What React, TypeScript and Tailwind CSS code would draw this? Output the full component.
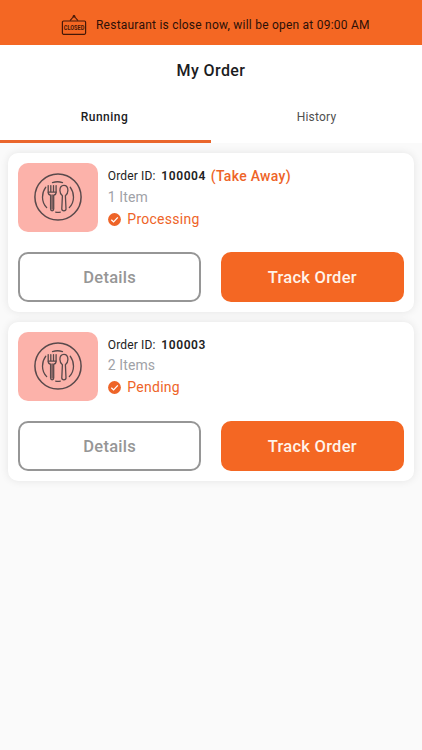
import { useState } from 'react';

interface Order {
  id: number;
  items: number;
  status: string;
  takeAway?: boolean;
}

const orders: Order[] = [
  { id: 100004, items: 1, status: 'Processing', takeAway: true },
  { id: 100003, items: 2, status: 'Pending' },
];

const tabs = ['Running', 'History'];

function ClosedSign() {
  return (
    <svg className="w-[26px] h-[22px] shrink-0 overflow-visible" viewBox="0 0 26 22" fill="none" stroke="#451808">
      <rect x="1.4" y="7" width="23.2" height="13.3" rx="1.2" strokeWidth="1.2" />
      <path d="M9 6.6L12.2 3M17 6.6L13.8 3" strokeWidth="1.1" />
      <circle cx="13" cy="2.3" r="1" strokeWidth="0.9" fill="#451808" />
      <text
        x="13"
        y="16.2"
        textAnchor="middle"
        textLength="20.5"
        lengthAdjust="spacingAndGlyphs"
        fontSize="6.8"
        fontWeight="700"
        fontFamily="Roboto, sans-serif"
        fill="#451808"
        stroke="none"
      >
        CLOSED
      </text>
    </svg>
  );
}

function PlateIcon() {
  return (
    <svg className="w-12 h-12" viewBox="0 0 48 48" fill="none" stroke="#59494b" strokeWidth="1.3" strokeLinecap="round" strokeLinejoin="round">
      <circle cx="24" cy="24" r="23.1" strokeWidth="1.5" />
      {/* inner rim */}
      <path d="M18.5 9.6Q23.5 7.9 28.5 9.6M21.7 39.2Q24 39.7 26.3 39.2" />
      <path d="M11.8 14.2Q8.5 18.7 8.5 24.2Q8.5 30.2 12.7 34.6M36.2 14.2Q39.5 18.7 39.5 24.2Q39.5 30.2 35.3 34.6" />
      {/* fork */}
      <path d="M14.2 12.6V19.2Q14.2 21.7 16.6 22.2V36Q16.6 37.8 18.1 37.8Q19.7 37.8 19.7 36V22.2Q22.1 21.7 22.1 19.2V12.6" />
      <path d="M16.8 12.6V19M19.5 12.6V19M14.3 19.2H22M18.1 22V36" />
      {/* spoon */}
      <path d="M28.4 22.7Q25.9 20.7 25.9 17.5Q25.9 12.3 29.9 12.3Q33.9 12.3 33.9 17.5Q33.9 20.7 31.4 22.7L32 36Q32 37.8 29.9 37.8Q27.8 37.8 27.8 36Z" />
    </svg>
  );
}

function CheckBadge() {
  return (
    <svg className="w-[13px] h-[13px] shrink-0" viewBox="0 0 13 13" fill="none">
      <circle cx="6.5" cy="6.5" r="6.4" fill="#ee6428" />
      <path d="M3.3 6.7L5.6 8.9L9.8 4.4" stroke="#fff" strokeWidth="1.3" />
    </svg>
  );
}

function OrderCard({ order }: { order: Order }) {
  return (
    <div className="h-[159px] rounded-[10px] bg-white p-2.5 shadow-[0_0_8px_rgba(0,0,0,0.09)]">
      <div className="flex gap-2.5 h-[69.5px]">
        <div className="w-[79.5px] shrink-0 rounded-[10px] bg-[#fcb2aa] flex items-center justify-center">
          <PlateIcon />
        </div>
        <div className="pt-[3px] whitespace-nowrap">
          <div className={`flex items-center text-[12px] text-[#222] ${order.takeAway ? 'h-[21px]' : 'h-[20px]'}`}>
            <span className="w-[53.5px] tracking-[0.14px]">Order ID:</span>
            <span className="w-[49.5px] font-semibold tracking-[0.6px]">{order.id}</span>
            {order.takeAway && <span className="text-[14px] font-medium text-[#ee6428] tracking-[0.3px]">(Take Away)</span>}
          </div>
          <div className="h-[22px] flex items-center text-[14px] text-[#9fa2a7] tracking-[0.1px]">
            {`${order.items} ${order.items > 1 ? 'Items' : 'Item'}`}
          </div>
          <div className="h-[22px] flex items-center gap-1.5 pl-[0.5px] text-[14px] text-[#ee6428] tracking-[0.26px]">
            <CheckBadge />
            {order.status}
          </div>
        </div>
      </div>
      <div className="mt-5 grid grid-cols-2 gap-5 h-[49.5px] text-[16.5px] font-medium tracking-[0.25px]">
        <button className="rounded-[10px] border-2 border-[#969696] pt-[2.5px] text-[#969696]">Details</button>
        <button className="rounded-[10px] bg-[#f46723] pt-[2.5px] text-[#fff3e9]">Track Order</button>
      </div>
    </div>
  );
}

export default function App() {
  const [activeTab, setActiveTab] = useState('Running');

  return (
    <div className="w-full h-screen flex flex-col overflow-hidden bg-[#fafafa] font-[Roboto,sans-serif]">
      <div className="h-[44.5px] shrink-0 bg-[#f46723] flex items-center gap-[9px] pl-[61px] pt-[5px] text-[12px] text-[#2c1008] whitespace-nowrap">
        <ClosedSign />
        <span className="tracking-[0.225px]">Restaurant is close now, will be open at 09:00 AM</span>
      </div>
      <div className="h-[50px] shrink-0 bg-white flex items-center justify-center pt-[2.5px] text-[16px] font-medium tracking-[0.4px] text-[#1b1c1e]">My Order</div>
      <div className="h-[48.5px] shrink-0 bg-white flex text-[12px]">
        {tabs.map((tab) => (
          <button
            key={tab}
            onClick={() => setActiveTab(tab)}
            className={`w-1/2 border-b-[3px] ${activeTab === tab ? 'border-[#ea662c] pr-[2px] font-medium tracking-[0.5px] text-[#1b1c1e]' : 'border-transparent tracking-[0.2px] text-[#4f4f4f]'}`}
          >
            {tab}
          </button>
        ))}
      </div>
      <div className="pt-[9.5px] px-[8.3px] flex flex-col gap-2.5">
        {orders.map((order) => (
          <OrderCard key={order.id} order={order} />
        ))}
      </div>
    </div>
  );
}
